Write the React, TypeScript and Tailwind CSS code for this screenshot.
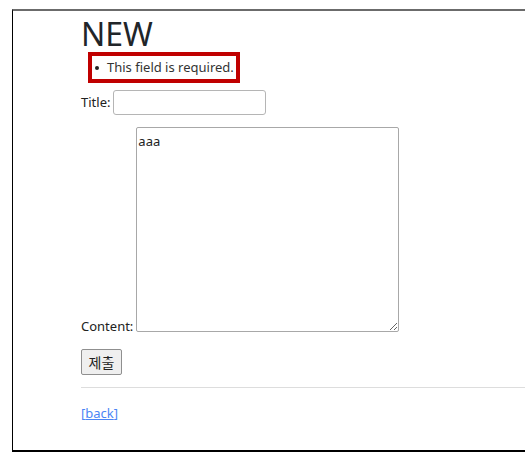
import React from 'react';

const font = { fontFamily: '"Noto Sans", "Noto Sans CJK KR", sans-serif' };

export default function App() {
  return (
    <div className="w-[525px] h-[471px] overflow-hidden bg-white" style={font}>
      <div className="ml-[12px] mt-[9px] h-[443px] w-[600px] border-l-[1.5px] border-b-2 border-t-2 border-l-black border-b-black border-t-[#6b6b6b] pl-[68px] text-[13px] text-[#222]">
        {/* Heading */}
        <h1 className="mt-[1px] text-[32px] leading-[44px] font-normal text-[#212529]">NEW</h1>

        {/* Error list */}
        <div className="ml-[7px] mt-[-4px] w-[152px] h-[31px] border-[4px] border-[#c00000] flex items-center pl-[3px]">
          <span className="w-[4px] h-[4px] rounded-full bg-[#222] mr-[8px]" />
          <span className="text-[#333]">This field is required.</span>
        </div>

        {/* Title */}
        <div className="mt-[7px] flex items-center gap-[3px]">
          <label>Title:</label>
          <input className="w-[153px] h-[25px] border border-[#b5b5b5] rounded-[3px] bg-white" />
        </div>

        {/* Content */}
        <div className="mt-[12px] flex items-end gap-[3px]">
          <label className="leading-[16px] mb-[-2px]">Content:</label>
          <textarea
            defaultValue="aaa"
            className="w-[263px] h-[205px] border border-[#a8a8a8] rounded-[2px] px-[1px] py-[5px] text-[13px] leading-[16px] text-[#222] resize"
          />
        </div>

        <button className="mt-[17px] w-[41px] h-[26px] border border-[#8f8f8f] rounded-[2px] bg-[#efefef] text-[14px] flex items-center justify-center">제출</button>

        <hr className="mt-[12px] border-t border-[#ddd]" />

        <div className="mt-[16px]">
          <a href="#" className="text-[#4b86f5]">
            [<span className="underline">back</span>]
          </a>
        </div>
      </div>
    </div>
  );
}
